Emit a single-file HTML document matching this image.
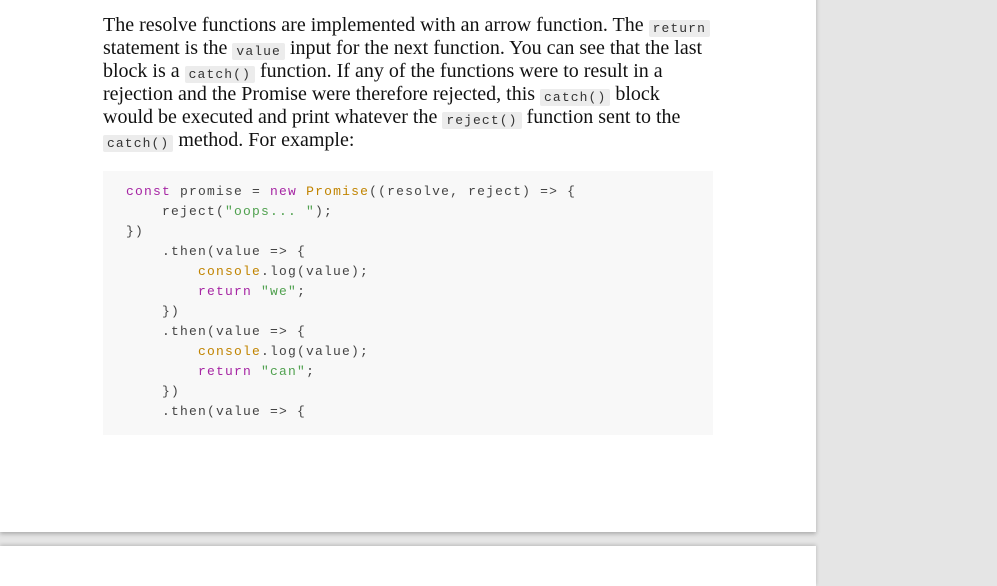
<!DOCTYPE html>
<html><head><style>
body{margin:0;background:#e5e5e5;width:997px;height:557px;overflow:hidden;position:relative}
.pg{position:absolute;left:0;top:-10px;width:816px;height:542px;background:#fff;box-shadow:0 2px 4px rgba(0,0,0,.25)}
.pg2{position:absolute;left:0;top:546px;width:816px;height:40px;background:#fff;box-shadow:0 -1px 4px rgba(0,0,0,.2)}
p{position:absolute;left:103px;top:14px;width:608px;margin:0;font-family:"Liberation Serif",serif;font-size:20px;line-height:23px;color:#111}
code{font-family:"Liberation Mono",monospace;font-size:13px;line-height:13px;letter-spacing:1.1px;background:#ececec;padding:2px 4px;border-radius:2px;color:#333;display:inline-block;vertical-align:-1px}
pre{position:absolute;left:103px;top:171px;width:610px;height:264px;margin:0;background:#f8f8f8;box-sizing:border-box;padding:11px 0 0 23px;font-family:"Liberation Mono",monospace;font-size:13px;letter-spacing:1.2px;line-height:20px;color:#444}
.k{color:#a626a4}.o{color:#c18401}.s{color:#50a14f}
</style></head><body>
<div class="pg"></div><div class="pg2"></div>
<p>The resolve functions are implemented with an arrow function. The <code>return</code> statement is the <code>value</code> input for the next function. You can see that the last block is a <code>catch()</code> function. If any of the functions were to result in a rejection and the Promise were therefore rejected, this <code>catch()</code> block would be executed and print whatever the <code>reject()</code> function sent to the <code>catch()</code> method. For example:</p>
<pre><span class="k">const</span> promise = <span class="k">new</span> <span class="o">Promise</span>((resolve, reject) =&gt; {
    reject(<span class="s">"oops... "</span>);
})
    .then(value =&gt; {
        <span class="o">console</span>.log(value);
        <span class="k">return</span> <span class="s">"we"</span>;
    })
    .then(value =&gt; {
        <span class="o">console</span>.log(value);
        <span class="k">return</span> <span class="s">"can"</span>;
    })
    .then(value =&gt; {</pre>
</body></html>
